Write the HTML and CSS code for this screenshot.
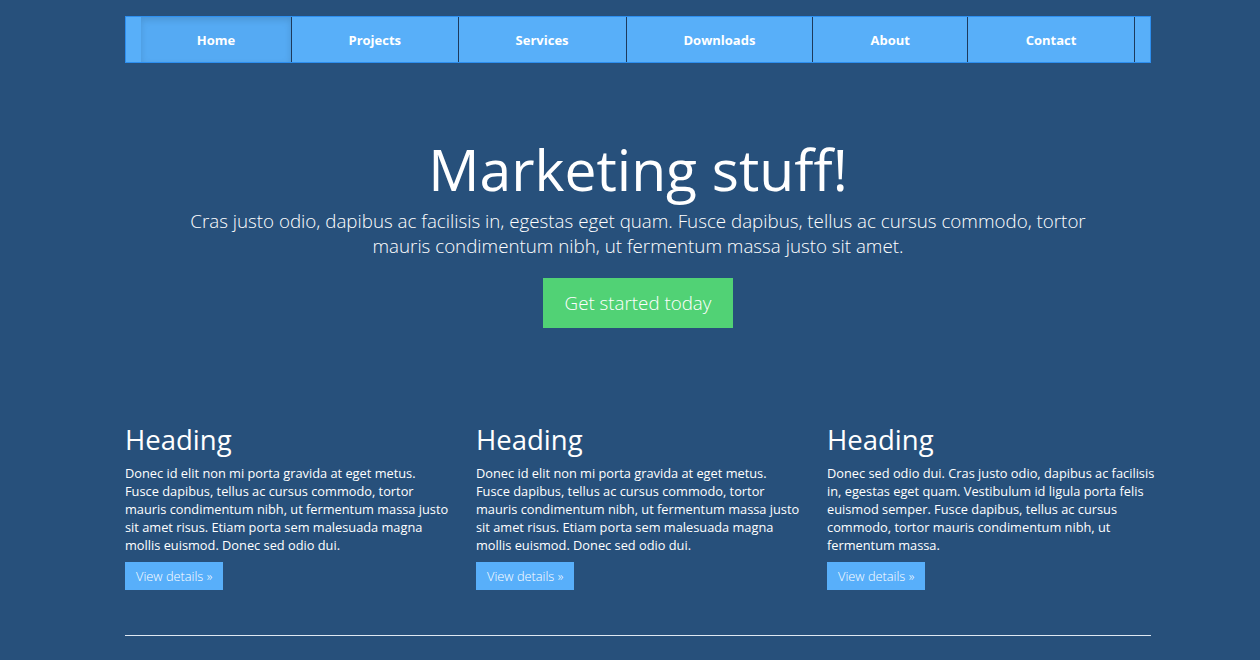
FILE: index.html
```html
<!DOCTYPE html>
<html>
<head>
<meta charset="utf-8">
<link rel="stylesheet" href="styles.css">
</head>
<body>
<div class="container">
  <nav class="masthead">
    <ul class="nav">
      <li class="active"><a href="#">Home</a></li>
      <li><a href="#">Projects</a></li>
      <li><a href="#">Services</a></li>
      <li><a href="#">Downloads</a></li>
      <li><a href="#">About</a></li>
      <li><a href="#">Contact</a></li>
    </ul>
  </nav>
  <section class="jumbotron">
    <h1>Marketing stuff!</h1>
    <p class="lead">Cras justo odio, dapibus ac facilisis in, egestas eget quam. Fusce dapibus, tellus ac cursus commodo, tortor mauris condimentum nibh, ut fermentum massa justo sit amet.</p>
    <a class="btn-lg" href="#">Get started today</a>
  </section>
  <div class="row">
    <div class="col">
      <h2>Heading</h2>
      <p>Donec id elit non mi porta gravida at eget metus. Fusce dapibus, tellus ac cursus commodo, tortor mauris condimentum nibh, ut fermentum massa justo sit amet risus. Etiam porta sem malesuada magna mollis euismod. Donec sed odio dui.</p>
      <a class="btn" href="#">View details »</a>
    </div>
    <div class="col">
      <h2>Heading</h2>
      <p>Donec id elit non mi porta gravida at eget metus. Fusce dapibus, tellus ac cursus commodo, tortor mauris condimentum nibh, ut fermentum massa justo sit amet risus. Etiam porta sem malesuada magna mollis euismod. Donec sed odio dui.</p>
      <a class="btn" href="#">View details »</a>
    </div>
    <div class="col col-last">
      <h2>Heading</h2>
      <p>Donec sed odio dui. Cras justo odio, dapibus ac facilisis in, egestas eget quam. Vestibulum id ligula porta felis euismod semper. Fusce dapibus, tellus ac cursus commodo, tortor mauris condimentum nibh, ut fermentum massa.</p>
      <a class="btn" href="#">View details »</a>
    </div>
  </div>
  <hr class="rule">
</div>
</body>
</html>
```
FILE: styles.css
```css
html, body {
  margin: 0;
  padding: 0;
}
body {
  background: #27507b;
  color: #ffffff;
  font-family: "Open Sans", "Noto Sans", sans-serif;
  font-size: 12.8px;
  line-height: 18px;
}
.container {
  width: 1026px;
  margin-left: 125px;
  padding-top: 16px;
}
.masthead {
  background: #58aff9;
  border: 1px solid #2d8ff0;
  height: 45px;
}
.nav {
  list-style: none;
  margin: 0 15px;
  padding: 0;
  display: flex;
  height: 45px;
}
.nav li {
  border-right: 1px solid #1d3a5c;
  display: flex;
}
.nav li:nth-child(1) { width: 150px; }
.nav li:nth-child(2) { width: 166px; }
.nav li:nth-child(3) { width: 167px; }
.nav li:nth-child(4) { width: 186px; }
.nav li:nth-child(5) { width: 154px; }
.nav li:nth-child(6) { width: 166px; }
.nav li a {
  flex: 1;
  display: flex;
  align-items: center;
  justify-content: center;
  color: #ffffff;
  text-decoration: none;
  font-weight: 700;
  font-size: 13px;
}
.nav li.active a {
  background: #55aaf3;
  box-shadow: inset 0 3px 7px rgba(0, 0, 0, 0.12);
}
.jumbotron {
  text-align: center;
  padding-top: 71px;
  padding-bottom: 70px;
}
.jumbotron h1 {
  font-size: 57px;
  font-weight: 400;
  line-height: 70px;
  margin: 0;
}
.lead {
  font-size: 18.75px;
  font-weight: 300;
  line-height: 25px;
  margin: 4px 40px 20px;
}
.btn-lg {
  display: inline-block;
  background: #51d275;
  color: #ffffff;
  text-decoration: none;
  font-size: 18.75px;
  font-weight: 300;
  line-height: 50px;
  height: 50px;
  padding: 0 22px;
}
.row {
  display: flex;
  gap: 25px;
  padding-top: 25px;
}
.col {
  flex: none;
  width: 326px;
}
.col-last {
  width: 334px;
  margin-right: -8px;
}
.col h2 {
  font-size: 27.5px;
  font-weight: 400;
  line-height: 34px;
  margin: 0 0 7px;
}
.col p {
  margin: 0 0 8px;
}
.btn {
  display: inline-block;
  background: #58affa;
  color: #ffffff;
  text-decoration: none;
  font-weight: 300;
  font-size: 12.8px;
  line-height: 28px;
  height: 28px;
  padding: 0 11px;
}
.rule {
  border: 0;
  border-top: 1px solid #dfe8f2;
  margin: 45px 0 0;
}
```
